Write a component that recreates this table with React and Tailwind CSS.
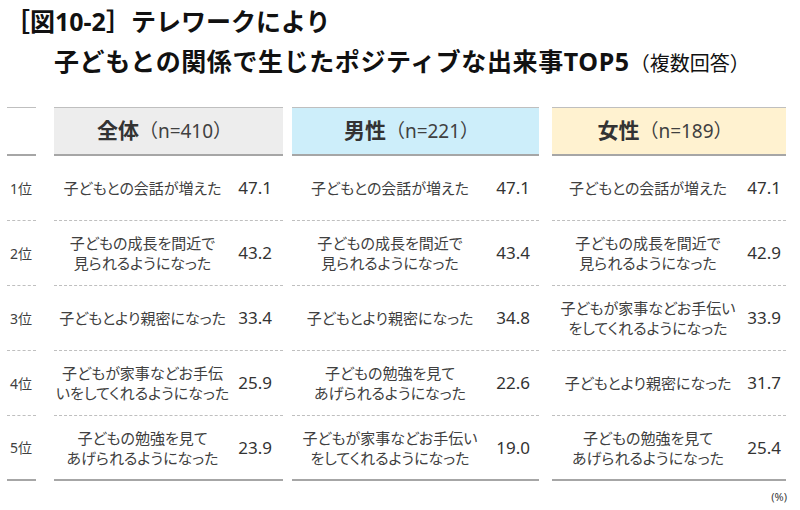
const cols = [
  {
    key: "all",
    title: "全体",
    n: "（n=410）",
    head: "bg-[#ededed]",
    box: "ml-[18px] w-[229px]",
    val: "w-[52px] pr-[11px]",
    rows: [
      [["子どもとの会話が増えた"], "47.1"],
      [["子どもの成長を間近で", "見られるようになった"], "43.2"],
      [["子どもとより親密になった"], "33.4"],
      [["子どもが家事などお手伝", "いをしてくれるようになった"], "25.9"],
      [["子どもの勉強を見て", "あげられるようになった"], "23.9"],
    ],
  },
  {
    key: "male",
    title: "男性",
    n: "（n=221）",
    head: "bg-[#cdeefa]",
    box: "ml-[9px] w-[247px]",
    val: "w-[51px] pr-[9px]",
    rows: [
      [["子どもとの会話が増えた"], "47.1"],
      [["子どもの成長を間近で", "見られるようになった"], "43.4"],
      [["子どもとより親密になった"], "34.8"],
      [["子どもの勉強を見て", "あげられるようになった"], "22.6"],
      [["子どもが家事などお手伝い", "をしてくれるようになった"], "19.0"],
    ],
  },
  {
    key: "female",
    title: "女性",
    n: "（n=189）",
    head: "bg-[#fff2d0]",
    box: "ml-[13px] w-[234px]",
    val: "w-[42px] pr-[5px]",
    rows: [
      [["子どもとの会話が増えた"], "47.1"],
      [["子どもの成長を間近で", "見られるようになった"], "42.9"],
      [["子どもが家事などお手伝い", "をしてくれるようになった"], "33.9"],
      [["子どもとより親密になった"], "31.7"],
      [["子どもの勉強を見て", "あげられるようになった"], "25.4"],
    ],
  },
];

const ranks = ["1位", "2位", "3位", "4位", "5位"];

export default function App() {
  return (
    <div className="relative h-[510px] w-[800px] overflow-hidden bg-white font-['Noto_Sans','Noto_Sans_CJK_JP',sans-serif] text-[#111]">
      <div className="pt-[4px]">
        <h1 className="pl-[5px] text-[25px] font-bold leading-[34px]">［図10-2］テレワークにより</h1>
        <h2 className="mt-[6px] pl-[54px] text-[25px] font-bold leading-[34px] tracking-[0.6px]">
          子どもとの関係で生じたポジティブな出来事TOP5
          <span className="text-[20px] font-normal tracking-normal">（複数回答）</span>
        </h2>
      </div>

      <div className="mt-[26px] pl-[7px] text-[#404040]">
        {/* header */}
        <div className="flex h-[49px]">
          <div className="w-[29px] border-t border-b-2 border-t-[#bfbfbf] border-b-[#a6a6a6]" />
          {cols.map((c) => (
            <div
              key={c.key}
              className={`${c.box} ${c.head} flex items-center justify-center pr-[8px] border-t border-b-2 border-t-[#bfbfbf] border-b-[#a6a6a6]`}
            >
              <span className="text-[21px] font-bold text-[#333]">{c.title}</span>
              <span className="text-[19px] text-[#404040]">{c.n}</span>
            </div>
          ))}
        </div>

        {/* rows */}
        {ranks.map((r, i) => {
          const last = i === ranks.length - 1;
          const line = last
            ? "border-b-2 border-solid border-[#a6a6a6]"
            : "border-b border-dashed border-[#bfbfbf]";
          return (
            <div key={r} className="flex h-[65px]">
              <div className={`flex w-[29px] items-center pl-[3px] text-[14px] ${line}`}>{r}</div>
              {cols.map((c) => {
                const [lines, v] = c.rows[i];
                return (
                  <div key={c.key} className={`${c.box} flex items-center ${line}`}>
                    <div className="flex-1 text-center text-[15px] leading-[20px] [font-feature-settings:'palt']">
                      {lines.map((l) => (
                        <div key={l}>{l}</div>
                      ))}
                    </div>
                    <div className={`${c.val} text-right text-[17px] text-[#333]`}>{v}</div>
                  </div>
                );
              })}
            </div>
          );
        })}
      </div>

      <div className="mt-[8px] pr-[13px] text-right text-[11px] text-[#404040]">(%)</div>
    </div>
  );
}
